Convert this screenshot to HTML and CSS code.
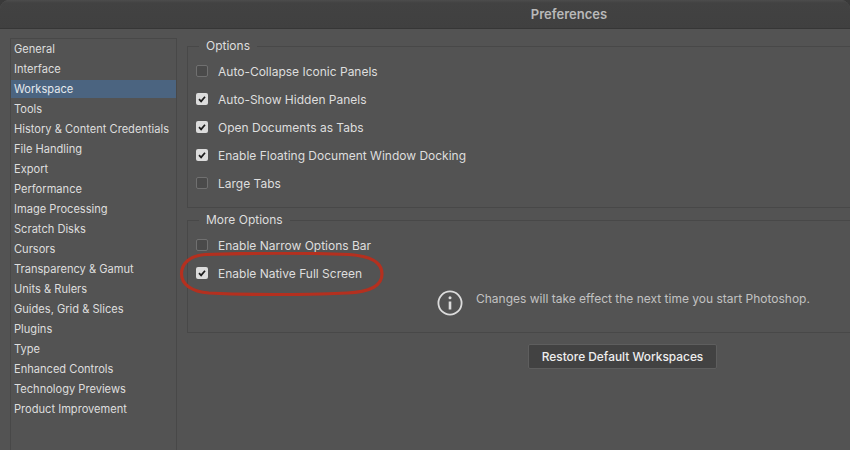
FILE: index.html
```html
<!DOCTYPE html>
<html lang="en">
<head>
    <meta charset="UTF-8">
    <meta name="viewport" content="width=device-width, initial-scale=1.0">
    <title>Preferences</title>
    <link rel="stylesheet" href="styles.css">
</head>
<body>
    <div class="window">
        <!-- title bar -->
        <header class="titlebar">Preferences</header>

        <div class="main">
            <!-- category list -->
            <ul class="sidebar">
                <li>General</li>
                <li>Interface</li>
                <li class="selected">Workspace</li>
                <li>Tools</li>
                <li>History &amp; Content Credentials</li>
                <li>File Handling</li>
                <li>Export</li>
                <li>Performance</li>
                <li>Image Processing</li>
                <li>Scratch Disks</li>
                <li>Cursors</li>
                <li>Transparency &amp; Gamut</li>
                <li>Units &amp; Rulers</li>
                <li>Guides, Grid &amp; Slices</li>
                <li>Plugins</li>
                <li>Type</li>
                <li>Enhanced Controls</li>
                <li>Technology Previews</li>
                <li>Product Improvement</li>
            </ul>

            <div class="content">
                <fieldset class="group group-options">
                    <legend>Options</legend>
                    <div class="row"><span class="check"></span>Auto-Collapse Iconic Panels</div>
                    <div class="row"><span class="check on"><svg viewBox="0 0 12 12"><path d="M3 6.2 5.1 8.4 9 3.7"/></svg></span>Auto-Show Hidden Panels</div>
                    <div class="row"><span class="check on"><svg viewBox="0 0 12 12"><path d="M3 6.2 5.1 8.4 9 3.7"/></svg></span>Open Documents as Tabs</div>
                    <div class="row"><span class="check on"><svg viewBox="0 0 12 12"><path d="M3 6.2 5.1 8.4 9 3.7"/></svg></span>Enable Floating Document Window Docking</div>
                    <div class="row"><span class="check"></span>Large Tabs</div>
                </fieldset>

                <fieldset class="group group-more">
                    <legend>More Options</legend>
                    <div class="row"><span class="check"></span>Enable Narrow Options Bar</div>
                    <div class="row row-marked">
                        <span class="check on"><svg viewBox="0 0 12 12"><path d="M3 6.2 5.1 8.4 9 3.7"/></svg></span>Enable Native Full Screen
                        <!-- red marker drawn over the screenshot -->
                        <svg class="marker" viewBox="0 0 206 44"><path d="M26 2.5C70 1 130 1 170 2.5 192 4 203 11 203 22 203 33 192 40 168 41 120 43 70 43 30 41 12 39.5 2.5 32 2.5 22 2.5 12 10 4 26 2.5Z"/></svg>
                    </div>
                    <div class="notice">
                        <svg class="info" viewBox="0 0 26 26"><circle cx="13" cy="13" r="11.6"/><circle class="dot" cx="13" cy="7.8" r="1.5"/><path d="M13 11.5V19.5"/></svg>
                        <span>Changes will take effect the next time you start Photoshop.</span>
                    </div>
                </fieldset>

                <div class="actions">
                    <button class="btn" type="button">Restore Default Workspaces</button>
                </div>
            </div>
        </div>
    </div>
</body>
</html>
```

FILE: styles.css
```css
/* page */
html, body {
    margin: 0;
    height: 100%;
    overflow: hidden;
}

body {
    background-color: #3a3a3a;
    font-family: Inter, "Liberation Sans", sans-serif;
    font-size: 12px;
    color: #dedede;
}

.window {
    height: 450px;
    display: flex;
    flex-direction: column;
    background-color: #535353;
    border-radius: 9px 9px 0 0;
    overflow: hidden;
}

/* title bar */
.titlebar {
    height: 29px;
    box-sizing: border-box;
    padding-left: 288px;
    display: flex;
    align-items: center;
    justify-content: center;
    background: linear-gradient(#4c4c4c 0, #424242 3px, #404040 100%);
    border-bottom: 1px solid #363636;
    font-size: 13px;
    font-weight: 600;
    color: #b9b9b9;
}

/* main area */
.main {
    flex: 1;
    display: flex;
    gap: 10px;
    padding: 9px 0 0 10px;
    min-height: 0;
}

/* sidebar */
.sidebar {
    width: 167px;
    box-sizing: border-box;
    margin: 0;
    padding: 1px 0 0;
    list-style: none;
    border: 1px solid #484848;
    border-bottom: none;
    flex-shrink: 0;
}

.sidebar li {
    height: 18px;
    line-height: 19px;
    margin-bottom: 2px;
    padding-left: 3px;
    font-size: 11.1px;
    white-space: nowrap;
}

.sidebar .selected {
    background-color: #4b6480;
    color: #e4e9ee;
}

/* right side */
.content {
    flex: 1;
    min-width: 0;
    margin-right: -6px;
    padding-top: 1px;
}

.group {
    margin: 0;
    padding: 0 0 0 8px;
    border: 1px solid #484848;
    min-width: 0;
}

.group legend {
    margin-left: 3px;
    padding: 0 7px;
    height: 15px;
    line-height: 14px;
    font-size: 12px;
}

.group-options {
    height: 169px;
    box-sizing: border-box;
    padding-top: 3px;
}

.group-more {
    height: 120px;
    box-sizing: border-box;
    margin-top: 5px;
    padding-top: 3px;
}

.row {
    position: relative;
    height: 28px;
    display: flex;
    align-items: center;
    gap: 10px;
}

.check {
    width: 12px;
    height: 12px;
    box-sizing: border-box;
    border: 1.5px solid #707070;
    border-radius: 2px;
    background-color: #4a4a4a;
    flex-shrink: 0;
}

.check.on {
    border: none;
    background-color: #dcdcdc;
}

.check svg {
    display: block;
    width: 12px;
    height: 12px;
}

.check path {
    fill: none;
    stroke: #1c1c1c;
    stroke-width: 1.7;
}

.marker {
    position: absolute;
    left: -17px;
    top: -7px;
    width: 206px;
    height: 44px;
}

.marker path {
    fill: none;
    stroke: #b4301f;
    stroke-width: 3.2;
}

/* restart notice */
.notice {
    display: flex;
    align-items: flex-start;
    gap: 13px;
    margin: 3px 0 0 241px;
    color: #c2c2c2;
    white-space: nowrap;
}

.notice span {
    margin-top: 1px;
}

.info {
    width: 26px;
    height: 26px;
    flex-shrink: 0;
}

.info circle {
    fill: none;
    stroke: #dcdcdc;
    stroke-width: 1.8;
}

.info .dot {
    fill: #dcdcdc;
    stroke: none;
}

.info path {
    stroke: #dcdcdc;
    stroke-width: 2.6;
}

/* button */
.actions {
    display: flex;
    margin-top: 11px;
    padding-left: 341px;
}

.btn {
    width: 189px;
    height: 25px;
    padding: 0;
    border: 1px solid #5e5e5e;
    border-radius: 2px;
    background-color: #424242;
    color: #eeeeee;
    font-family: inherit;
    font-size: 11.9px;
    font-weight: 500;
}
```
